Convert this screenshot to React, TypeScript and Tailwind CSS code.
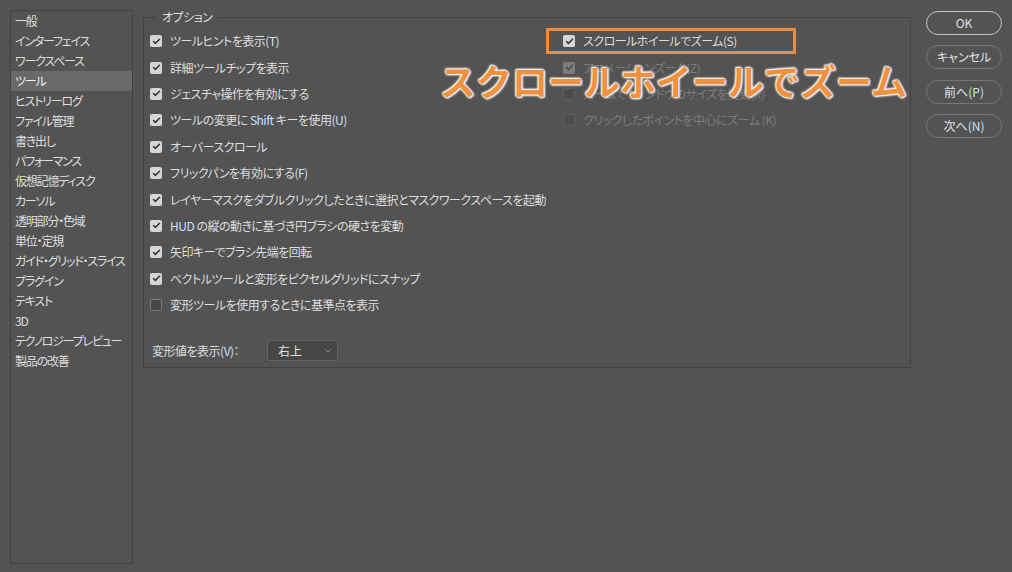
import { Check, ChevronDown } from "lucide-react"

const font = {
    fontFamily: '"Noto Sans CJK JP", "Noto Sans", sans-serif',
    fontFeatureSettings: '"palt"',
}

const navItems = [
    "一般",
    "インターフェイス",
    "ワークスペース",
    "ツール",
    "ヒストリーログ",
    "ファイル管理",
    "書き出し",
    "パフォーマンス",
    "仮想記憶ディスク",
    "カーソル",
    "透明部分・色域",
    "単位・定規",
    "ガイド・グリッド・スライス",
    "プラグイン",
    "テキスト",
    "3D",
    "テクノロジープレビュー",
    "製品の改善",
]

type Opt = { label: React.ReactNode; checked: boolean; disabled?: boolean }

const Key = ({ children }: { children: React.ReactNode }) => (
    <span className="text-[#cfe0f3]">{children}</span>
)

const leftOpts: Opt[] = [
    { label: <>ツールヒントを表示<Key>(T)</Key></>, checked: true },
    { label: "詳細ツールチップを表示", checked: true },
    { label: "ジェスチャ操作を有効にする", checked: true },
    { label: <>ツールの変更に <Key>Shift</Key> キーを使用<Key>(U)</Key></>, checked: true },
    { label: "オーバースクロール", checked: true },
    { label: <>フリックパンを有効にする<Key>(F)</Key></>, checked: true },
    { label: "レイヤーマスクをダブルクリックしたときに選択とマスクワークスペースを起動", checked: true },
    { label: <><Key>HUD</Key> の縦の動きに基づき円ブラシの硬さを変動</>, checked: true },
    { label: "矢印キーでブラシ先端を回転", checked: true },
    { label: "ベクトルツールと変形をピクセルグリッドにスナップ", checked: true },
    { label: "変形ツールを使用するときに基準点を表示", checked: false },
]

const rightOpts: Opt[] = [
    { label: "スクロールホイールでズーム(S)", checked: true },
    { label: "アニメーションズーム(Z)", checked: true, disabled: true },
    { label: "ズームでウィンドウのサイズを変更(R)", checked: false, disabled: true },
    { label: "クリックしたポイントを中心にズーム (K)", checked: false, disabled: true },
]

const Box = ({ checked, disabled }: { checked: boolean; disabled?: boolean }) => {
    if (checked) {
        return (
            <span
                className={`w-[12px] h-[12px] rounded-[2px] flex items-center justify-center shrink-0 ${
                    disabled ? "bg-[#7c7c7c]" : "bg-[#d6d6d6]"
                }`}
            >
                <Check size={9} strokeWidth={4} className={disabled ? "text-[#4a4a4a]" : "text-[#333]"} />
            </span>
        )
    }
    return (
        <span
            className={`w-[12px] h-[12px] rounded-[2px] border shrink-0 ${
                disabled ? "border-[#5f5f5f] bg-[#4d4d4d]" : "border-[#7a7a7a] bg-[#474747]"
            }`}
        />
    )
}

const Row = ({ opt }: { opt: Opt }) => (
    <div className="h-[26.4px] flex items-center gap-[8px]">
        <Box checked={opt.checked} disabled={opt.disabled} />
        <span
            className={`text-[12px] leading-none tracking-[-0.5px] whitespace-nowrap ${
                opt.disabled ? "text-[#7d7d7d]" : "text-[#dedede]"
            }`}
        >
            {opt.label}
        </span>
    </div>
)

const Btn = ({ children, primary }: { children: React.ReactNode; primary?: boolean }) => (
    <button
        className={`w-[76px] h-[24px] rounded-full border text-[12px] text-[#e2e2e2] flex items-center justify-center ${
            primary ? "border-[#c4c4c4] border-[1.5px]" : "border-[#767676]"
        }`}
    >
        {children}
    </button>
)

export default function App() {
    return (
        <div className="relative w-[1012px] h-[572px] bg-[#535353] overflow-hidden" style={font}>
            <div className="flex p-[10px]">
                {/* category list */}
                <div className="w-[123px] h-[554px] border border-[#424242]">
                    {navItems.map((item) => (
                        <div
                            key={item}
                            className={`h-[20px] flex items-center pl-[4px] text-[12px] tracking-[-1.2px] whitespace-nowrap ${
                                item === "ツール" ? "bg-[#696969] text-[#eeeeee]" : "text-[#dedede]"
                            }`}
                        >
                            {item}
                        </div>
                    ))}
                </div>

                {/* options */}
                <fieldset className="ml-[10px] w-[768px] h-[358px] border border-[#424242] px-[6px]">
                    <legend className="ml-[7px] px-[5px] text-[12px] leading-[14px] tracking-[-0.5px] text-[#dedede]">
                        オプション
                    </legend>
                    <div className="flex pt-[4px]">
                        <div className="w-[413px]">
                            {leftOpts.map((o, i) => (
                                <Row key={i} opt={o} />
                            ))}
                        </div>
                        <div>
                            {rightOpts.map((o, i) => (
                                <Row key={i} opt={o} />
                            ))}
                        </div>
                    </div>
                    <div className="flex items-center mt-[22px] pl-[2px]">
                        <span className="text-[12px] tracking-[-0.5px] text-[#dedede] w-[115px]">
                            変形値を表示<Key>(V)</Key>：
                        </span>
                        <div className="w-[71px] h-[21px] rounded-[3px] border border-[#646464] bg-[#464646] flex items-center justify-between pl-[10px] pr-[4px]">
                            <span className="text-[12px] text-[#e2e2e2]">右上</span>
                            <ChevronDown size={10} className="text-[#aaaaaa]" />
                        </div>
                    </div>
                </fieldset>

                {/* buttons */}
                <div className="ml-[15px] pt-[1px] flex flex-col gap-[10px]">
                    <Btn primary>OK</Btn>
                    <Btn>キャンセル</Btn>
                    <div className="mt-[1px]">
                        <Btn>
                            前へ<Key>(P)</Key>
                        </Btn>
                    </div>
                    <Btn>
                        次へ<Key>(N)</Key>
                    </Btn>
                </div>
            </div>

            {/* annotation */}
            <div className="absolute left-[546px] top-[28px] w-[250px] h-[26px] border-[3px] border-[#ee8c3e]" />
            <div
                className="absolute left-[440px] top-[56px] text-[36px] leading-[48px] font-bold text-[#f0913f] whitespace-nowrap [font-feature-settings:normal]"
                style={{
                    textShadow:
                        "0 0 2px #fff, 0 0 2px #fff, 0 0 3px #fff, 1px 1px 2px #fff, -1px -1px 2px #fff",
                }}
            >
                スクロールホイールでズーム
            </div>
        </div>
    )
}
